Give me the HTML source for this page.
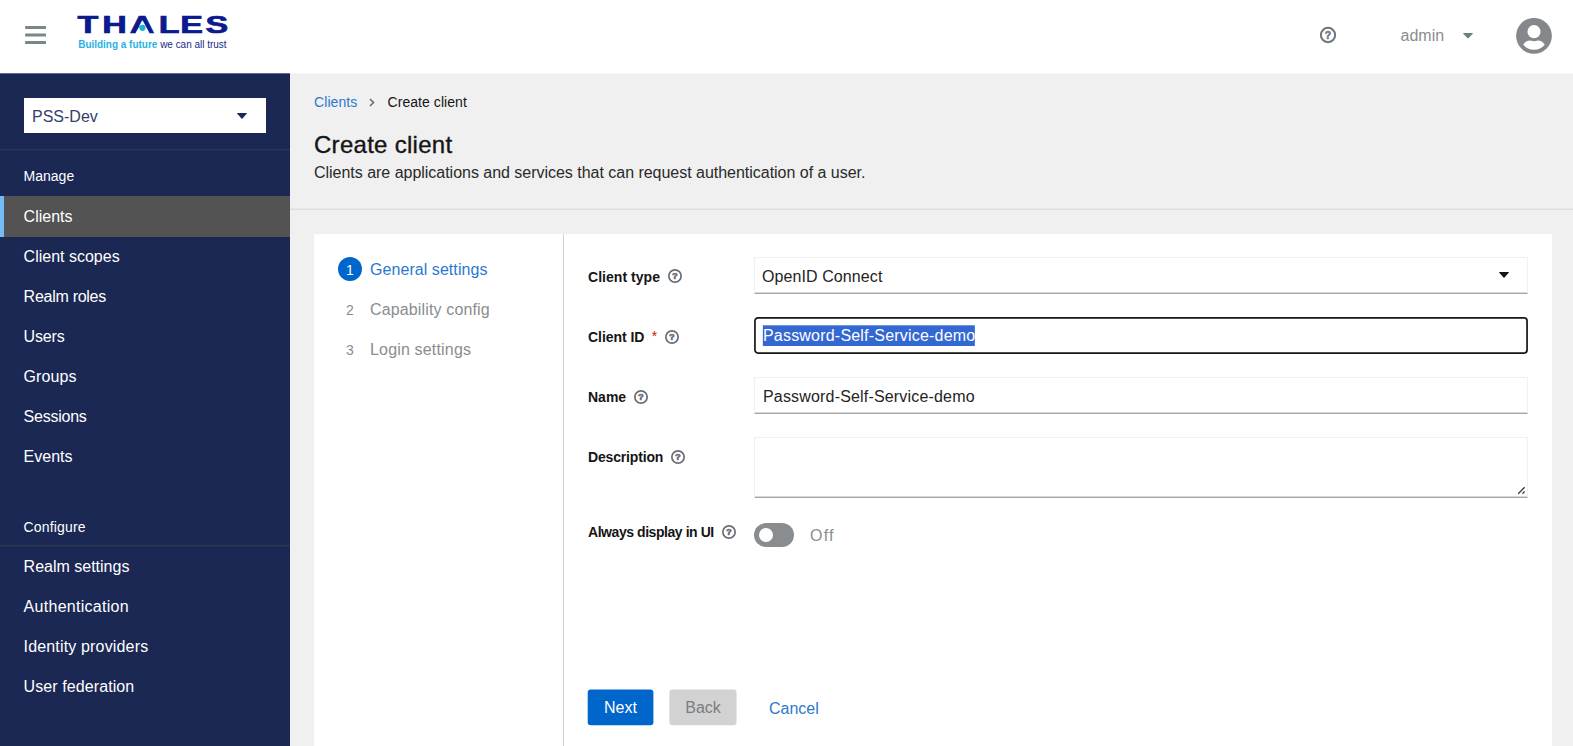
<!DOCTYPE html>
<html lang="en">
<head>
<meta charset="utf-8">
<title>Create client</title>
<style>
*{box-sizing:border-box;margin:0;padding:0}
html,body{width:1573px;height:746px;overflow:hidden;background:#f0f0f0}
body{font-family:"Liberation Sans",sans-serif;font-size:16px;color:#151515;position:relative}
.abs{position:absolute}
.t{position:absolute;white-space:nowrap;line-height:1}
a{text-decoration:none;color:#0066cc}
/* masthead */
#masthead{position:absolute;left:0;top:0;width:1573px;height:73px;background:#fff}
#burger{position:absolute;left:25px;top:25px;width:22px;height:20px;border:0;background:none;padding:0;line-height:0}
/* sidebar */
#sidebar{position:absolute;left:0;top:73px;width:290px;height:673px;background:#1b2854;color:#fff}
#realm{position:absolute;left:24px;top:24.5px;width:242px;height:35.5px;background:#fff;color:#34406b}
.navsec{position:absolute;left:23.6px;font-size:14px;color:#fff}
.navhr{position:absolute;left:0;width:290px;height:1px;background:#30374d;box-shadow:0 1px 0 #232d52}
.navitem{position:absolute;left:0;width:290px;height:40px;color:#fff;font-size:16px}
.navitem span{position:absolute;left:23.6px;top:11.5px;line-height:18px;white-space:nowrap}
.navitem.cur{background:#535353}
.navitem.cur:before{content:"";position:absolute;left:0;top:0;width:4px;height:100%;background:#73bcf7}
/* main */
#pagehead{position:absolute;left:290px;top:73px;width:1283px;height:137px;background:#f0f0f0;border-bottom:1px solid #dedede;box-shadow:inset 0 -1px 0 #e7e7e7}
#card{position:absolute;left:314px;top:234px;width:1238px;height:520px;background:#fff}
#wiznav{position:absolute;left:0;top:0;width:250px;height:520px;border-right:1px solid #d2d2d2}
.step{position:absolute;left:0;width:249px;height:24px}
.step b{position:absolute;left:24px;top:0;padding-top:.6px;width:24px;height:24px;border-radius:50%;font-weight:normal;font-size:14px;line-height:24px;text-align:center;color:#8a8d90}
.step span{position:absolute;left:56px;top:3.8px;line-height:18px;font-size:16px;color:#8a8d90;white-space:nowrap}
.step.cur b{background:#0066cc;color:#fff}
.step.cur span{color:#2b79cf}
label.fl{position:absolute;left:588px;font-weight:bold;font-size:14px;line-height:16px;white-space:nowrap;color:#151515}
.req{color:#c9190b;font-weight:normal}
.q{position:absolute}
.inp{position:absolute;left:754px;width:774px;height:37px;background:#fff;border:1px solid #f0f0f0;border-bottom:1px solid #a4a7aa;box-shadow:inset 0 -1px 0 #d9d9d9;font:16px "Liberation Sans",sans-serif;color:#242424;padding:0 7px;line-height:37px;white-space:nowrap}
.sel{position:relative;color:#fff;letter-spacing:.2px}
.btn{position:absolute;top:689px;height:37px;border:0;background:none;padding:0;font:16px "Liberation Sans",sans-serif;line-height:37px;text-align:center}
.btn span{position:relative}
</style>
</head>
<body>
<header id="masthead">
  <button id="burger" aria-label="Global navigation"><svg width="22" height="20" viewBox="0 0 22 20"><g fill="#7a8788"><rect x=".1" y=".9" width="20.9" height="3.05" rx=".6"/><rect x=".1" y="8.5" width="20.9" height="3.05" rx=".6"/><rect x=".1" y="16" width="20.9" height="3.05" rx=".6"/></g></svg></button>
  <svg class="abs" style="left:70px;top:10px" width="170" height="45" viewBox="0 0 170 45" aria-label="Thales">
    <g transform="scale(1.48,1)"><text y="23.2" x="5.11 21.87 40.41 59.97 74.54 91.49" font-family="Liberation Sans, sans-serif" font-weight="bold" font-size="23" fill="#0b1a8e" stroke="#0b1a8e" stroke-width=".7">THALES</text></g>
    <path d="M72.6 10.5l7.2 12.9h-14.4z" fill="#fff"/>
    <circle cx="72.4" cy="17.8" r="3.1" fill="#19b5d8"/>
    <text x="8.2" y="37.6" font-family="Liberation Sans, sans-serif" font-size="10" textLength="148.4" lengthAdjust="spacingAndGlyphs"><tspan fill="#1fb4e3" font-weight="bold">Building a future</tspan><tspan fill="#1b2a86"> we can all trust</tspan></text>
  </svg>
  <svg class="abs" style="left:1318.8px;top:25.9px" width="18" height="18" viewBox="0 0 18 18"><circle cx="9" cy="9" r="7.15" fill="none" stroke="#72767b" stroke-width="2"/><text x="9" y="12.9" text-anchor="middle" font-family="Liberation Sans, sans-serif" font-weight="bold" font-size="10.5" fill="#72767b" stroke="#72767b" stroke-width=".5">?</text></svg>
  <div class="t" style="left:1400.5px;top:27px;font-size:16px;line-height:18px;color:#8a8d90">admin</div>
  <svg class="abs" style="left:1463px;top:32.8px" width="10" height="6" viewBox="0 0 10 6"><path d="M.6 0h8.8q.9 .1 .3 .8L5.4 5.2q-.4 .4 -.8 0L.3 .8Q-.3 .1 .6 0z" fill="#6f7f7f"/></svg>
  <svg class="abs" style="left:1515.9px;top:17.6px" width="36" height="36" viewBox="0 0 36 36"><circle cx="18" cy="17.85" r="17.9" fill="#84888d"/><circle cx="18" cy="13.65" r="6.55" fill="#fff"/><path d="M7.25 26.8Q9.6 22.5 14.3 22.5Q18 23.9 21.7 22.5Q26.4 22.5 28.75 26.8A14 14 0 0 1 7.25 26.8z" fill="#fff"/></svg>
</header>

<div class="abs" style="left:0;top:73px;width:290px;height:1px;background:#5f6987;z-index:2"></div><div class="abs" style="left:290px;top:73px;width:1283px;height:1px;background:#f7f7f7;z-index:2"></div>
<nav id="sidebar">
  <div id="realm"><span class="t" style="left:8px;top:10px;font-size:16px;line-height:18px">PSS-Dev</span>
    <svg class="abs" style="left:213.2px;top:15px" width="10" height="6" viewBox="0 0 10 6"><path d="M.6 0h8.8q.9 .1 .3 .8L5.5 5.5q-.5 .5 -1 0L.3 .8Q-.3 .1 .6 0z" fill="#1b2854"/></svg></div>
  <div class="navhr" style="top:76px"></div>
  <div class="navsec t" style="top:95px;line-height:16px">Manage</div>
  <a class="navitem cur" style="top:123.2px;height:40.4px"><span style="top:11.8px">Clients</span></a>
  <a class="navitem" style="top:163.5px"><span>Client scopes</span></a>
  <a class="navitem" style="top:203.5px"><span style="letter-spacing:-0.27px">Realm roles</span></a>
  <a class="navitem" style="top:243.5px"><span style="letter-spacing:-0.16px">Users</span></a>
  <a class="navitem" style="top:283.5px"><span style="letter-spacing:0.08px">Groups</span></a>
  <a class="navitem" style="top:323.5px"><span style="letter-spacing:-0.24px">Sessions</span></a>
  <a class="navitem" style="top:363.5px"><span>Events</span></a>
  <div class="navsec t" style="top:445.5px;line-height:16px;letter-spacing:.15px">Configure</div>
  <div class="navhr" style="top:472px"></div>
  <a class="navitem" style="top:473.5px"><span>Realm settings</span></a>
  <a class="navitem" style="top:513.5px"><span style="letter-spacing:0.28px">Authentication</span></a>
  <a class="navitem" style="top:553.5px"><span style="letter-spacing:0.16px">Identity providers</span></a>
  <a class="navitem" style="top:593.5px"><span style="letter-spacing:0.09px">User federation</span></a>
</nav>

<section id="pagehead">
  <a class="t" href="#" style="left:24px;top:21px;font-size:14px;line-height:16px;color:#2b79cf;letter-spacing:.08px">Clients</a>
  <svg class="abs" style="left:79px;top:25px" width="6" height="9" viewBox="0 0 6 9"><path d="M1 1l3.5 3.5L1 8" fill="none" stroke="#6a6e73" stroke-width="1.6"/></svg>
  <span class="t" style="left:97.5px;top:21px;font-size:14px;line-height:16px;letter-spacing:.06px">Create client</span>
  <h1 class="t" style="left:24px;top:58px;font-size:24px;font-weight:normal;line-height:28px;letter-spacing:.28px;-webkit-text-stroke:.35px #151515">Create client</h1>
  <p class="t" style="left:24px;top:91.3px;font-size:16px;line-height:18px;color:#2a2a2a;letter-spacing:-.023px">Clients are applications and services that can request authentication of a user.</p>
</section>

<main id="card">
  <ol id="wiznav" style="list-style:none">
    <li class="step cur" style="top:23.4px"><b>1</b><span style="letter-spacing:.06px">General settings</span></li>
    <li class="step" style="top:63.4px"><b>2</b><span style="letter-spacing:.14px">Capability config</span></li>
    <li class="step" style="top:103.4px"><b>3</b><span style="letter-spacing:.17px">Login settings</span></li>
  </ol>
</main>

<form>
  <label class="fl" style="top:268.8px;letter-spacing:.04px">Client type</label><svg class="q" style="left:666.7px;top:268.1px" width="16" height="16" viewBox="0 0 16 16"><circle cx="8" cy="8" r="6.15" fill="none" stroke="#6a6e73" stroke-width="1.7"/><text x="8" y="11.3" text-anchor="middle" font-family="Liberation Sans, sans-serif" font-weight="bold" font-size="9.5" fill="#6a6e73" stroke="#6a6e73" stroke-width=".55">?</text></svg>
  <div class="inp" role="combobox" aria-label="Client type" style="top:257px;letter-spacing:.09px">OpenID Connect<svg class="abs" style="right:18px;top:13.6px" width="10" height="6" viewBox="0 0 10 6"><path d="M.6 0h8.8q.9 .1 .3 .8L5.5 5.5q-.5 .5 -1 0L.3 .8Q-.3 .1 .6 0z" fill="#151515"/></svg></div>
  <label class="fl" style="top:328.8px;letter-spacing:-.04px">Client ID<span class="req" style="margin-left:7.3px;position:relative;top:-1px">*</span></label><svg class="q" style="left:664.3px;top:328.5px" width="16" height="16" viewBox="0 0 16 16"><circle cx="8" cy="8" r="6.15" fill="none" stroke="#6a6e73" stroke-width="1.7"/><text x="8" y="11.3" text-anchor="middle" font-family="Liberation Sans, sans-serif" font-weight="bold" font-size="9.5" fill="#6a6e73" stroke="#6a6e73" stroke-width=".55">?</text></svg>
  <div class="inp" id="cid" role="textbox" aria-label="Client ID" style="top:318px;height:35px;border:0;background:none;box-shadow:none;line-height:35.6px;padding:0 0 0 9px"><svg class="abs" style="left:0;top:-1px" width="774" height="37" viewBox="0 0 774 37"><rect x="0.95" y="0.95" width="772.1" height="35.1" rx="3" fill="#fff" stroke="#151515" stroke-width="1.7"/><rect x="8.85" y="8.3" width="212" height="20.7" fill="#3367d1"/></svg><span class="sel">Password-Self-Service-demo</span></div>
  <label class="fl" style="top:388.8px">Name</label><svg class="q" style="left:633.3px;top:388.5px" width="16" height="16" viewBox="0 0 16 16"><circle cx="8" cy="8" r="6.15" fill="none" stroke="#6a6e73" stroke-width="1.7"/><text x="8" y="11.3" text-anchor="middle" font-family="Liberation Sans, sans-serif" font-weight="bold" font-size="9.5" fill="#6a6e73" stroke="#6a6e73" stroke-width=".55">?</text></svg>
  <div class="inp" role="textbox" aria-label="Name" style="top:377px;letter-spacing:.175px;padding-left:8px">Password-Self-Service-demo</div>
  <label class="fl" style="top:448.8px;letter-spacing:-.16px">Description</label><svg class="q" style="left:669.9px;top:448.5px" width="16" height="16" viewBox="0 0 16 16"><circle cx="8" cy="8" r="6.15" fill="none" stroke="#6a6e73" stroke-width="1.7"/><text x="8" y="11.3" text-anchor="middle" font-family="Liberation Sans, sans-serif" font-weight="bold" font-size="9.5" fill="#6a6e73" stroke="#6a6e73" stroke-width=".55">?</text></svg>
  <div class="inp" role="textbox" aria-multiline="true" aria-label="Description" style="top:437px;height:61px"><svg class="abs" style="right:1.4px;bottom:2.5px" width="9" height="9" viewBox="0 0 9 9"><path d="M7.7 1.2L1.2 7.7M7.7 5.4L5.4 7.7" stroke="#3c3c3c" stroke-width="1.3" fill="none"/></svg></div>
  <label class="fl" style="top:523.8px;letter-spacing:-.44px">Always display in UI</label><svg class="q" style="left:721.0px;top:524.0px" width="16" height="16" viewBox="0 0 16 16"><circle cx="8" cy="8" r="6.15" fill="none" stroke="#6a6e73" stroke-width="1.7"/><text x="8" y="11.3" text-anchor="middle" font-family="Liberation Sans, sans-serif" font-weight="bold" font-size="9.5" fill="#6a6e73" stroke="#6a6e73" stroke-width=".55">?</text></svg>
  <div class="abs" role="switch" aria-checked="false" style="left:754px;top:523px;width:40px;height:24px;border-radius:12px;background:#8a8d90"><i class="abs" style="left:5px;top:5px;width:14px;height:14px;border-radius:50%;background:#fff"></i></div>
  <span class="t" style="left:810px;top:526.6px;font-size:16px;line-height:18px;color:#8a8d90;letter-spacing:1.2px">Off</span>
  <button type="button" class="btn" style="left:587px;width:67px;color:#fff"><svg class="abs" style="left:0;top:0" width="67" height="37" viewBox="0 0 67 37"><rect x=".7" y=".5" width="65.7" height="35.8" rx="3" fill="#0066cc"/></svg><span>Next</span></button>
  <button type="button" class="btn" style="left:669px;width:68px;color:#7a7d80"><svg class="abs" style="left:0;top:0" width="68" height="37" viewBox="0 0 68 37"><rect x=".4" y=".5" width="67.1" height="35.8" rx="3" fill="#d2d2d2"/></svg><span>Back</span></button>
  <a class="t" href="#" style="left:769px;top:700px;font-size:16px;line-height:18px;color:#2b79cf">Cancel</a>
</form>

</body>
</html>
